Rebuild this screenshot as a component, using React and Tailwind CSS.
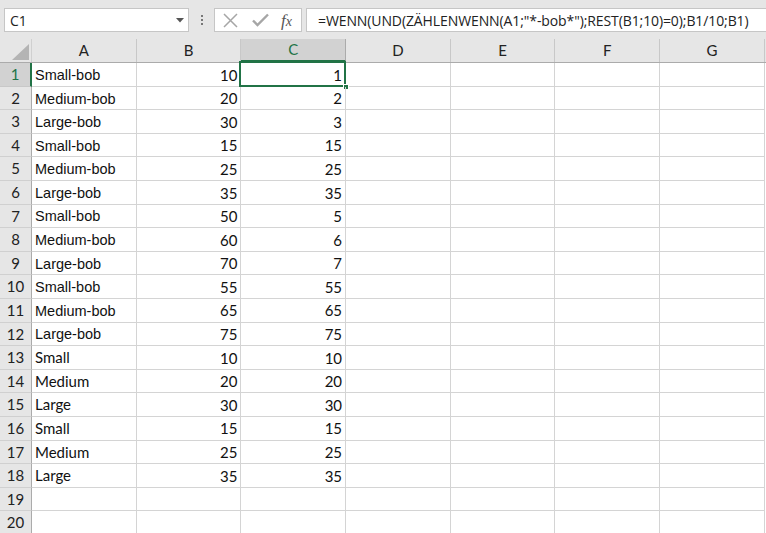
import React from "react";

const rows = [
  ["Small-bob", 10, 1, "a"],
  ["Medium-bob", 20, 2, "a"],
  ["Large-bob", 30, 3, "a"],
  ["Small-bob", 15, 15, "a"],
  ["Medium-bob", 25, 25, "a"],
  ["Large-bob", 35, 35, "a"],
  ["Small-bob", 50, 5, "a"],
  ["Medium-bob", 60, 6, "a"],
  ["Large-bob", 70, 7, "a"],
  ["Small-bob", 55, 55, "a"],
  ["Medium-bob", 65, 65, "a"],
  ["Large-bob", 75, 75, "a"],
  ["Small", 10, 10, "c"],
  ["Medium", 20, 20, "c"],
  ["Large", 30, 30, "c"],
  ["Small", 15, 15, "c"],
  ["Medium", 25, 25, "c"],
  ["Large", 35, 35, "c"],
  ["", "", "", "c"],
  ["", "", "", "c"],
];

const cols = ["A", "B", "C", "D", "E", "F", "G"];
const calibri = { fontFamily: "Lato, 'Noto Sans', sans-serif" };

export default function App() {
  return (
    <div className="w-[766px] h-[533px] overflow-hidden bg-[#e6e6e6] relative" style={calibri}>
      {/* Formula bar */}
      <div className="h-[39px] flex items-start pt-[8px] pl-[4px]">
        <div className="w-[185px] h-[24px] bg-white border border-[#c6c6c6] flex items-center justify-between pl-[5px] pr-[4px]">
          <span className="text-[14px] text-[#222]" style={{ fontFamily: "'Open Sans', sans-serif" }}>C1</span>
          <svg width="8" height="5" viewBox="0 0 8 5"><path d="M0 0h8L4 4.5z" fill="#555" /></svg>
        </div>
        <div className="w-[25px] h-[24px] flex flex-col items-center justify-center gap-[2px]">
          <div className="w-[2px] h-[2px] bg-[#777]" />
          <div className="w-[2px] h-[2px] bg-[#777]" />
          <div className="w-[2px] h-[2px] bg-[#777]" />
        </div>
        <div className="w-[88px] h-[24px] bg-white border border-[#c6c6c6] flex items-center pl-[8px]">
          <svg width="15" height="15" viewBox="0 0 15 15"><path d="M1 1L14 14M14 1L1 14" stroke="#a6a6a6" strokeWidth="1.5" fill="none" /></svg>
          <svg className="ml-[14px]" width="17" height="14" viewBox="0 0 17 14"><path d="M1 7.5L5.5 12L16 1.5" stroke="#a6a6a6" strokeWidth="2.4" fill="none" /></svg>
          <span className="ml-[12px] text-[17px] text-[#555] italic leading-none" style={{ fontFamily: "'Liberation Serif', serif" }}>
            f<span className="text-[14px]">x</span>
          </span>
        </div>
        <div className="ml-[4px] flex-1 h-[24px] bg-white border border-[#c6c6c6] border-r-0 flex items-center pl-[11px]">
          <span className="text-[14px] text-[#222] whitespace-nowrap tracking-[-0.1px]" style={{ fontFamily: "'Open Sans', sans-serif" }}>
            =WENN(UND(ZÄHLENWENN(A1;"*-bob*");REST(B1;10)=0);B1/10;B1)
          </span>
        </div>
      </div>

      {/* Sheet */}
      <div className="flex flex-col">
        {/* header row */}
        <div className="flex h-[24px] border-b border-[#ababab]">
          <div className="w-[32px] h-full border-r border-[#d0d0d0] relative">
            <svg className="absolute right-[2px] bottom-[2px]" width="17" height="16" viewBox="0 0 17 16"><path d="M17 0V16H0z" fill="#b4b4b4" /></svg>
          </div>
          {cols.map((c) => (
            <div
              key={c}
              className={
                c === "C"
                  ? "w-[104.7px] h-full flex items-center justify-center bg-[#d2d2d2] border-r border-[#ababab] border-b-2 border-b-[#217346] text-[#217346] text-[15px]"
                  : "w-[104.7px] h-full flex items-center justify-center border-r border-[#c8c8c8] text-[#222] text-[15px]"
              }
            >
              {c}
            </div>
          ))}
        </div>
        {rows.map((r, i) => (
          <div key={i} className="flex h-[23.6px] bg-white">
            <div
              className={
                i === 0
                  ? "w-[32px] h-full flex items-center justify-center bg-[#d2d2d2] border-r-2 border-[#217346] border-b border-b-[#c8c8c8] text-[#217346] text-[15px]"
                  : "w-[32px] h-full flex items-center justify-center bg-[#e6e6e6] border-r border-[#ababab] border-b border-b-[#d0d0d0] text-[#222] text-[15px]"
              }
            >
              {i + 1}
            </div>
            <div
              className={
                r[3] === "a"
                  ? "w-[104.7px] h-full border-r border-b border-[#d4d4d4] flex items-center pl-[3px] pt-[3px] text-[#111] whitespace-nowrap"
                  : "w-[104.7px] h-full border-r border-b border-[#d4d4d4] flex items-center pl-[3px] text-[15px] text-[#111] whitespace-nowrap"
              }
              style={r[3] === "a" ? { fontFamily: "'Liberation Sans', Arial, sans-serif", fontSize: "14.5px" } : calibri}
            >
              {r[0]}
            </div>
            <div className="w-[104.7px] h-full border-r border-b border-[#d4d4d4] flex items-center justify-end pr-[3px] pt-[1px] text-[15px] text-[#111]">
              {r[1]}
            </div>
            <div className="w-[104.7px] h-full border-r border-b border-[#d4d4d4] flex items-center justify-end pr-[3px] pt-[1px] text-[15px] text-[#111] relative">
              {r[2]}
              {i === 0 && (
                <>
                  <div className="absolute left-[-2px] top-[-2px] right-[-1px] bottom-[-1px] border-2 border-[#217346]" />
                  <div className="absolute right-[-4px] bottom-[-4px] w-[6px] h-[6px] bg-[#217346] border border-white" />
                </>
              )}
            </div>
            {[0, 1, 2, 3].map((k) => (
              <div key={k} className="w-[104.7px] h-full border-r border-b border-[#d4d4d4]" />
            ))}
          </div>
        ))}
      </div>
    </div>
  );
}
